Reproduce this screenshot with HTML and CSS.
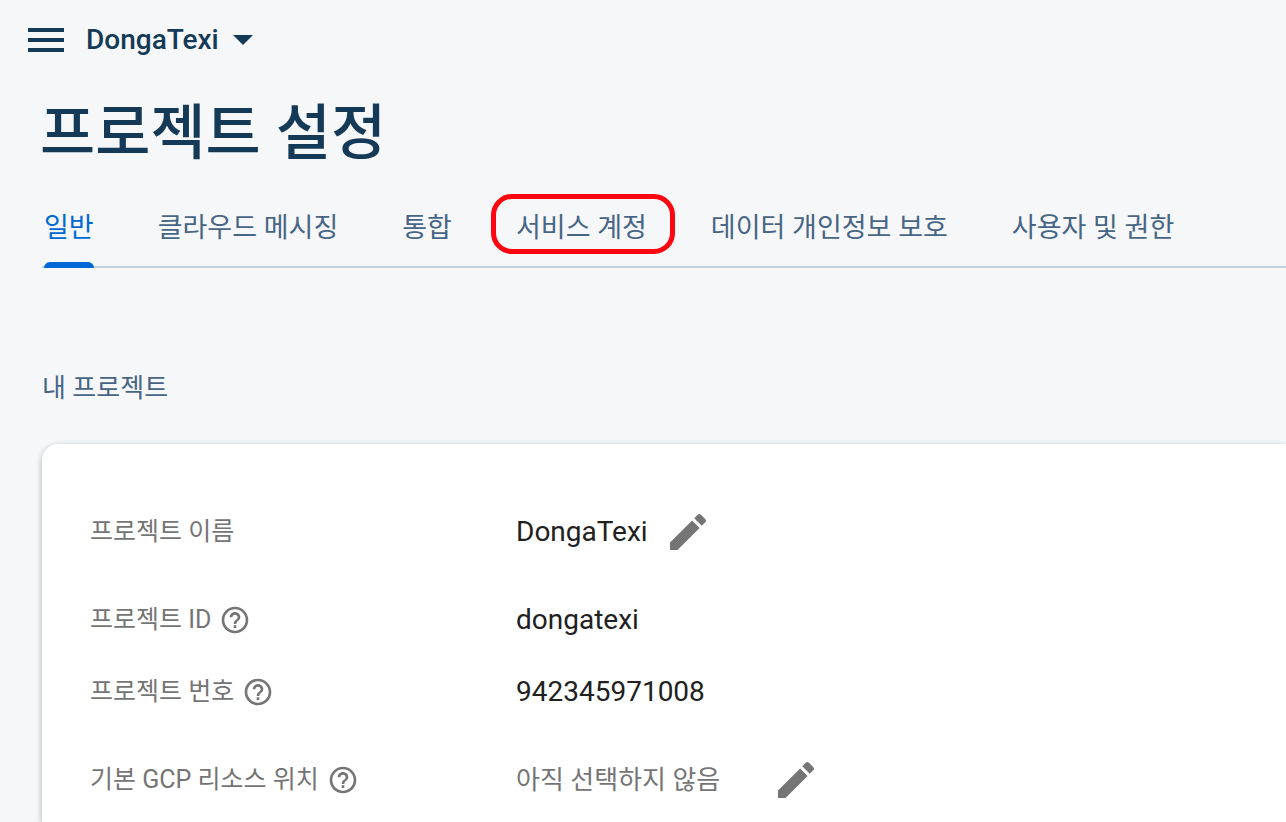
FILE: index.html
```html
<!DOCTYPE html>
<html lang="ko">
<head>
  <meta charset="UTF-8">
  <meta name="viewport" content="width=device-width, initial-scale=1">
  <title>프로젝트 설정</title>
  <link rel="stylesheet" href="styles.css">
</head>
<body>

  <header class="topbar">
    <button class="menu-btn" type="button" aria-label="메뉴">
      <svg class="icon" viewBox="0 0 24 24"><path d="M3 18h18v-2H3v2zm0-5h18v-2H3v2zm0-7v2h18V6H3z"/></svg>
    </button>
    <button class="project-btn" type="button">
      DongaTexi
      <svg class="caret" viewBox="0 0 20 10"><path d="M0 0l10 10L20 0z"/></svg>
    </button>
  </header>

  <h1 class="title">프로젝트 설정</h1>

  <nav class="tabs">
    <a class="tab active" href="#general">일반</a>
    <a class="tab" href="#messaging">클라우드 메시징</a>
    <a class="tab" href="#integrations">통합</a>
    <a class="tab marked" href="#service-accounts">서비스 계정</a>
    <a class="tab" href="#privacy">데이터 개인정보 보호</a>
    <a class="tab" href="#iam">사용자 및 권한</a>
  </nav>

  <main class="content">
    <h2 class="section-title">내 프로젝트</h2>

    <dl class="card">
      <div class="row editable">
        <dt>프로젝트 이름</dt>
        <dd>
          DongaTexi
          <button class="edit-btn" type="button" aria-label="프로젝트 이름 수정">
            <svg class="icon" viewBox="0 0 24 24"><path d="M3 17.25V21h3.75L17.81 9.94l-3.75-3.75L3 17.25zM20.71 7.04a1 1 0 0 0 0-1.41l-2.34-2.34a1 1 0 0 0-1.41 0l-1.83 1.83 3.75 3.75 1.83-1.83z"/></svg>
          </button>
        </dd>
      </div>
      <div class="row">
        <dt>
          프로젝트 ID
          <svg class="help" viewBox="0 0 24 24"><path d="M11 18h2v-2h-2v2zm1-16C6.48 2 2 6.48 2 12s4.480 10 10 10 10-4.480 10-10S17.520 2 12 2zm0 18c-4.410 0-8-3.590-8-8s3.590-8 8-8 8 3.590 8 8-3.590 8-8 8zm0-14c-2.210 0-4 1.790-4 4h2c0-1.100.9-2 2-2s2 .9 2 2c0 2-3 1.750-3 5h2c0-2.250 3-2.500 3-5 0-2.210-1.790-4-4-4z"/></svg>
        </dt>
        <dd>dongatexi</dd>
      </div>
      <div class="row">
        <dt>
          프로젝트 번호
          <svg class="help" viewBox="0 0 24 24"><path d="M11 18h2v-2h-2v2zm1-16C6.48 2 2 6.48 2 12s4.480 10 10 10 10-4.480 10-10S17.520 2 12 2zm0 18c-4.410 0-8-3.590-8-8s3.590-8 8-8 8 3.590 8 8-3.590 8-8 8zm0-14c-2.210 0-4 1.790-4 4h2c0-1.100.9-2 2-2s2 .9 2 2c0 2-3 1.750-3 5h2c0-2.250 3-2.500 3-5 0-2.210-1.790-4-4-4z"/></svg>
        </dt>
        <dd>942345971008</dd>
      </div>
      <div class="row editable">
        <dt>
          기본 GCP 리소스 위치
          <svg class="help" viewBox="0 0 24 24"><path d="M11 18h2v-2h-2v2zm1-16C6.48 2 2 6.48 2 12s4.480 10 10 10 10-4.480 10-10S17.520 2 12 2zm0 18c-4.410 0-8-3.590-8-8s3.590-8 8-8 8 3.590 8 8-3.590 8-8 8zm0-14c-2.210 0-4 1.790-4 4h2c0-1.100.9-2 2-2s2 .9 2 2c0 2-3 1.750-3 5h2c0-2.250 3-2.500 3-5 0-2.210-1.790-4-4-4z"/></svg>
        </dt>
        <dd class="empty">
          아직 선택하지 않음
          <button class="edit-btn" type="button" aria-label="리소스 위치 수정">
            <svg class="icon" viewBox="0 0 24 24"><path d="M3 17.25V21h3.75L17.81 9.94l-3.75-3.75L3 17.25zM20.71 7.04a1 1 0 0 0 0-1.41l-2.34-2.34a1 1 0 0 0-1.41 0l-1.83 1.83 3.75 3.75 1.83-1.83z"/></svg>
          </button>
        </dd>
      </div>
    </dl>
  </main>

</body>
</html>
```
FILE: styles.css
```css
*, *::after {
  box-sizing: border-box;
}
body {
  display: flex;
  flex-direction: column;
  min-height: 100vh;
  margin: 0;
  background-color: #f6f7f9;
  color: #212121;
  font-family: Roboto, "Noto Sans CJK KR", sans-serif;
  font-size: 28px;
  line-height: 40px;
}
button {
  padding: 0;
  border: none;
  background: none;
  color: inherit;
  font: inherit;
  cursor: pointer;
}
svg {
  display: block;
  fill: currentColor;
}
.icon {
  width: 48px;
  height: 48px;
}

/* top bar */
.topbar {
  display: flex;
  align-items: center;
  gap: 16px;
  height: 80px;
  padding: 0 22px;
  color: #153a57;
}
.project-btn {
  display: flex;
  align-items: center;
  gap: 14px;
  font-weight: 500;
}
.caret {
  width: 20px;
  height: 10px;
}
.title {
  margin: 0;
  padding: 0 40px;
  color: #153a57;
  font-size: 60px;
  font-weight: 500;
  line-height: 108px;
}

/* tabs */
.tabs {
  display: flex;
  gap: 64px;
  height: 80px;
  margin-left: 42px;
  padding-left: 2px;
  border-bottom: 2px solid #c3d1de;
}
.tab {
  position: relative;
  color: #476585;
  font-size: 27px;
  line-height: 80px;
  text-decoration: none;
  white-space: nowrap;
}
.tab.active {
  color: #0068d6;
}
.tab.active::after {
  content: "";
  position: absolute;
  left: 0;
  right: 0;
  bottom: -2px;
  height: 6px;
  border-radius: 6px 6px 0 0;
  background-color: #0068d6;
}
.tab.marked::after {
  content: "";
  position: absolute;
  top: 6px;
  left: -25px;
  right: -28px;
  height: 60px;
  border: 5px solid #ff0510;
  border-radius: 21px;
}

/* project card */
.content {
  display: flex;
  flex: 1;
  flex-direction: column;
  padding: 100px 0 0 42px;
}
.section-title {
  margin: 0 0 36px;
  color: #476585;
  font-size: 26px;
  font-weight: 400;
}
.card {
  display: flex;
  flex: 1;
  flex-direction: column;
  gap: 24px;
  margin: 0;
  padding: 48px 48px 0;
  border-radius: 16px 0 0 0;
  background-color: #fff;
  box-shadow: 0 2px 6px rgba(0, 0, 0, 0.3);
}
.row {
  display: grid;
  grid-template-columns: 426px 1fr;
  align-items: center;
  min-height: 48px;
}
.row.editable {
  margin: 16px 0;
}
dt {
  display: flex;
  align-items: center;
  gap: 8px;
  color: #757575;
  font-size: 25px;
}
dd {
  display: flex;
  align-items: center;
  gap: 16px;
  margin: 0;
}
dd.empty {
  gap: 52px;
  color: #757575;
  font-size: 26px;
}
.edit-btn {
  color: #757575;
}
.help {
  width: 32px;
  height: 32px;
}
```
